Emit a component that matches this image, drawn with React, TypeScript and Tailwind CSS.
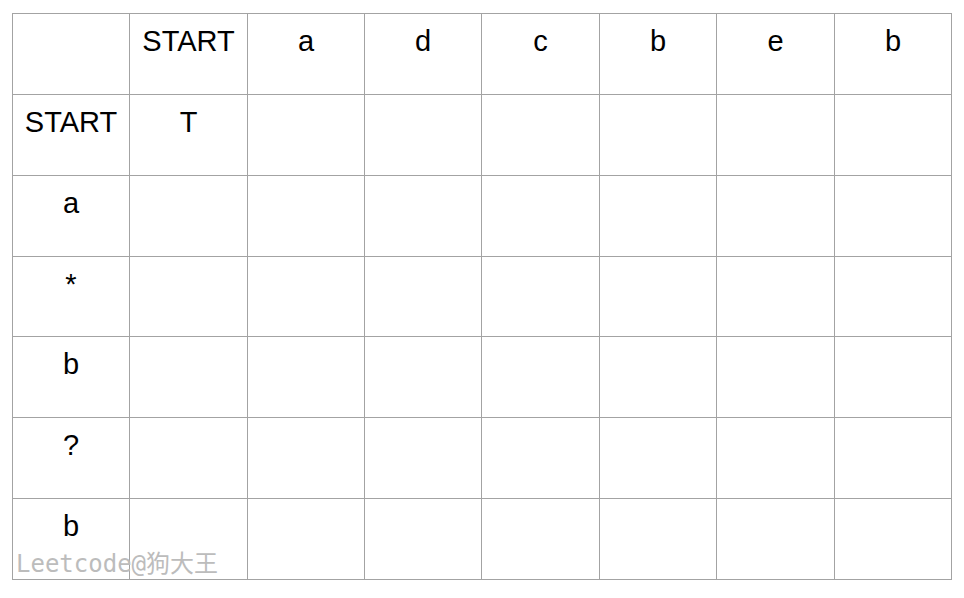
const header = ["", "START", "a", "d", "c", "b", "e", "b"];
const rowLabels = ["START", "a", "*", "b", "?", "b"];

export default function App() {
  const rows: string[][] = [
    header,
    ...rowLabels.map((label, i) => [label, i === 0 ? "T" : "", "", "", "", "", "", ""])
  ];

  return (
    <div className="relative w-[964px] h-[598px] bg-white overflow-hidden" style={{ fontFamily: '"Liberation Sans", Arial, sans-serif' }}>
      <div className="ml-[12px] mt-[13px] w-[940px] grid grid-cols-[117px_118px_117px_117px_118px_117px_118px_117px] grid-rows-[81px_81px_81px_80px_81px_81px_81px] border-l border-t border-[#a3a3a3]">
        {rows.map((row, r) =>
          row.map((cell, c) => (
            <div
              key={`${r}-${c}`}
              className="border-r border-b border-[#a3a3a3] pt-[11px] text-center text-[29px] leading-[33px] text-black"
            >
              {cell}
            </div>
          ))
        )}
      </div>

      {/* watermark */}
      <div
        className="absolute left-[16px] top-[550px] text-[24px] leading-[28px] text-[#bcbcbc] whitespace-nowrap"
        style={{ fontFamily: '"DejaVu Sans Mono", "Noto Sans CJK SC", monospace' }}
      >
        Leetcode@狗大王
      </div>
    </div>
  );
}
